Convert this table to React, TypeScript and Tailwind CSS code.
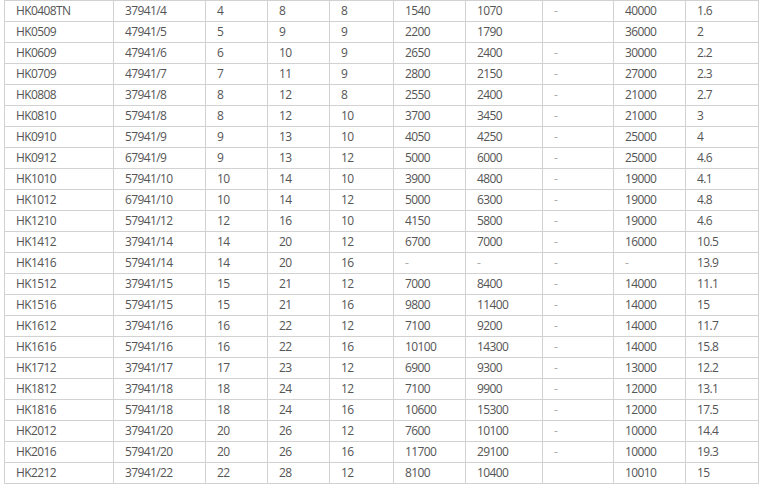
const rows: string[][] = [
  ["HK0408TN", "37941/4", "4", "8", "8", "1540", "1070", "-", "40000", "1.6"],
  ["HK0509", "47941/5", "5", "9", "9", "2200", "1790", "", "36000", "2"],
  ["HK0609", "47941/6", "6", "10", "9", "2650", "2400", "-", "30000", "2.2"],
  ["HK0709", "47941/7", "7", "11", "9", "2800", "2150", "-", "27000", "2.3"],
  ["HK0808", "37941/8", "8", "12", "8", "2550", "2400", "-", "21000", "2.7"],
  ["HK0810", "57941/8", "8", "12", "10", "3700", "3450", "-", "21000", "3"],
  ["HK0910", "57941/9", "9", "13", "10", "4050", "4250", "-", "25000", "4"],
  ["HK0912", "67941/9", "9", "13", "12", "5000", "6000", "-", "25000", "4.6"],
  ["HK1010", "57941/10", "10", "14", "10", "3900", "4800", "-", "19000", "4.1"],
  ["HK1012", "67941/10", "10", "14", "12", "5000", "6300", "-", "19000", "4.8"],
  ["HK1210", "57941/12", "12", "16", "10", "4150", "5800", "-", "19000", "4.6"],
  ["HK1412", "37941/14", "14", "20", "12", "6700", "7000", "-", "16000", "10.5"],
  ["HK1416", "57941/14", "14", "20", "16", "-", "-", "-", "-", "13.9"],
  ["HK1512", "37941/15", "15", "21", "12", "7000", "8400", "-", "14000", "11.1"],
  ["HK1516", "57941/15", "15", "21", "16", "9800", "11400", "-", "14000", "15"],
  ["HK1612", "37941/16", "16", "22", "12", "7100", "9200", "-", "14000", "11.7"],
  ["HK1616", "57941/16", "16", "22", "16", "10100", "14300", "-", "14000", "15.8"],
  ["HK1712", "37941/17", "17", "23", "12", "6900", "9300", "-", "13000", "12.2"],
  ["HK1812", "37941/18", "18", "24", "12", "7100", "9900", "-", "12000", "13.1"],
  ["HK1816", "57941/18", "18", "24", "16", "10600", "15300", "-", "12000", "17.5"],
  ["HK2012", "37941/20", "20", "26", "12", "7600", "10100", "-", "10000", "14.4"],
  ["HK2016", "57941/20", "20", "26", "16", "11700", "29100", "-", "10000", "19.3"],
  ["HK2212", "37941/22", "22", "28", "12", "8100", "10400", "", "10010", "15"],
];

const widths = ["w-[109px]", "w-[92px]", "w-[62px]", "w-[62px]", "w-[64px]", "w-[72px]", "w-[77px]", "w-[71px]", "w-[72px]", "w-[73px]"];

export default function App() {
  return (
    <div className="bg-white w-[762px] h-[489px] overflow-hidden pl-[4px]">
      <table
        className="table-fixed border-collapse w-[754px] text-[12px] tracking-[-0.6px] text-[#555]"
        style={{ fontFamily: '"Open Sans", "Noto Sans", sans-serif' }}
      >
        <colgroup>
          {widths.map((w, i) => (
            <col key={i} className={w} />
          ))}
        </colgroup>
        <tbody>
          {rows.map((r, i) => (
            <tr key={i} className="h-[21px]">
              {r.map((c, j) => (
                <td
                  key={j}
                  className={`border border-[#d2d2d2] pl-[11px] py-0 leading-[20px] whitespace-nowrap ${c === "-" ? "text-[#aaa]" : ""}`}
                >
                  {c}
                </td>
              ))}
            </tr>
          ))}
        </tbody>
      </table>
    </div>
  );
}
